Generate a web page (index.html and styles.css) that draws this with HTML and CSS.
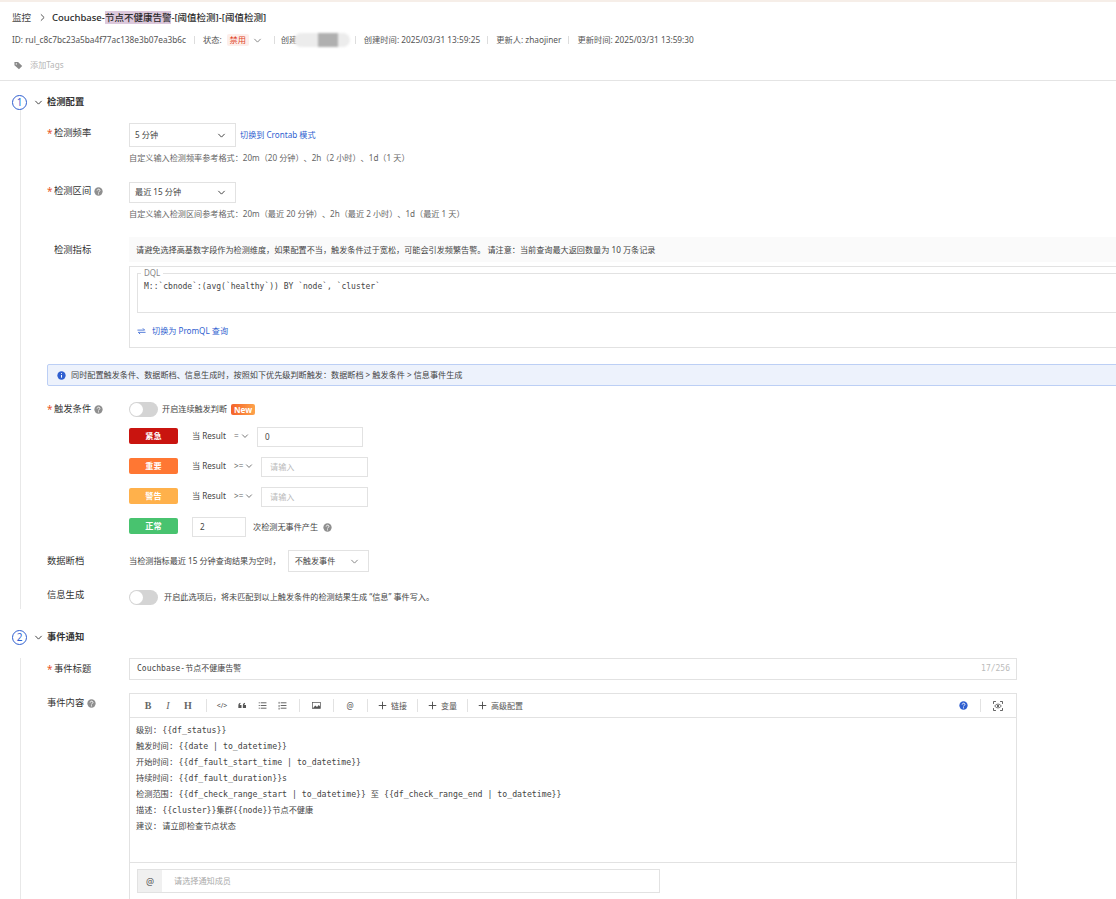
FILE: index.html
```html
<!DOCTYPE html>
<html lang="zh-CN">
<head>
<meta charset="utf-8">
<title>Couchbase-节点不健康告警</title>
<link rel="stylesheet" href="styles.css">
</head>
<body>
<svg class="defs" width="0" height="0" aria-hidden="true">
  <symbol id="chev" viewBox="0 0 10 10"><path d="M1.5 3.2 5 6.8l3.5-3.6" fill="none" stroke="currentColor" stroke-width="1.1"/></symbol>
  <symbol id="help" viewBox="0 0 10 10"><circle cx="5" cy="5" r="4.6" fill="currentColor"/><path d="M3.5 4c0-2 3.1-2 3.1-.2 0 1.2-1.6 1.1-1.6 2.3" fill="none" stroke="#fff" stroke-width="1"/><circle cx="5" cy="7.6" r=".65" fill="#fff"/></symbol>
  <symbol id="plus" viewBox="0 0 10 10"><path d="M5 .8v8.4M.8 5h8.4" stroke="currentColor" stroke-width="1"/></symbol>
</svg>
<div class="strip"></div>
<header class="head">
  <div class="crumbs"><span class="crumb-root">监控</span><svg class="crumb-sep"><use href="#chev"/></svg><h1 class="title">Couchbase-<mark class="mark">节点不健康告警</mark>-[阈值检测]-[阈值检测]</h1></div>
  <div class="meta">
    <span>ID: rul_c8c7bc23a5ba4f77ac138e3b07ea3b6c</span><i class="bar"></i>
    <span>状态:</span><span class="status">禁用</span><svg class="ic9 grey status-chev"><use href="#chev"/></svg><i class="bar"></i>
    <span class="creator">创建<span class="blur"><span class="blur-block"></span></span></span><i class="bar"></i>
    <span>创建时间: 2025/03/31 13:59:25</span><i class="bar bar-n"></i>
    <span>更新人: zhaojiner</span><i class="bar bar-n"></i>
    <span>更新时间: 2025/03/31 13:59:30</span>
  </div>
  <div class="tags"><svg class="tag-ic" viewBox="0 0 10 10"><path d="M.5 1.2h4l4.6 4.4-3.6 3.6L.5 4.8z" fill="#8a8a8a"/><circle cx="2.6" cy="3.2" r=".8" fill="#fff"/></svg><span>添加Tags</span></div>
</header>

<main class="main">
  <div class="sec-head"><span class="step">1</span><svg class="ic9 dark"><use href="#chev"/></svg><h2 class="sec-title">检测配置</h2></div>
  <section class="sec-body sec-one">
    <div class="row r-freq">
      <label class="lab"><b class="req">*</b>检测频率</label>
      <div class="col">
        <div class="line"><div class="select s-a">5 分钟<svg class="ic9 dark"><use href="#chev"/></svg></div><a class="link crontab">切换到 Crontab 模式</a></div>
        <p class="hint">自定义输入检测频率参考格式：20m（20 分钟）、2h（2 小时）、1d（1 天）</p>
      </div>
    </div>
    <div class="row r-range">
      <label class="lab"><b class="req">*</b>检测区间<svg class="ic9 q"><use href="#help"/></svg></label>
      <div class="col">
        <div class="select s-b">最近 15 分钟<svg class="ic9 dark"><use href="#chev"/></svg></div>
        <p class="hint">自定义输入检测区间参考格式：20m（最近 20 分钟）、2h（最近 2 小时）、1d（最近 1 天）</p>
      </div>
    </div>
    <div class="row r-metric">
      <label class="lab lab-plain">检测指标</label>
      <div class="col col-wide">
        <div class="notice">请避免选择高基数字段作为检测维度，如果配置不当，触发条件过于宽松，可能会引发频繁告警。 请注意：当前查询最大返回数量为 10 万条记录</div>
        <div class="dql-box">
          <fieldset class="dql"><legend class="legend">DQL</legend><code class="code">M::`cbnode`:(avg(`healthy`)) BY `node`, `cluster`</code></fieldset>
          <a class="link switch"><svg class="swap" viewBox="0 0 10 8"><path d="M.5 3h8L6.500 1M9.500 5.500h-8l2 2" fill="none" stroke="currentColor" stroke-width=".9"/></svg>切换为 PromQL 查询</a>
        </div>
      </div>
    </div>
    <div class="alert"><svg class="alert-ic" viewBox="0 0 10 10"><circle cx="5" cy="5" r="4.600" fill="#2f5fd0"/><path d="M5 4.400v3M5 2.400v1" stroke="#fff" stroke-width="1.100"/></svg>同时配置触发条件、数据断档、信息生成时，按照如下优先级判断触发：数据断档 &gt; 触发条件 &gt; 信息事件生成</div>
    <div class="row r-trigger">
      <label class="lab"><b class="req">*</b>触发条件<svg class="ic9 q"><use href="#help"/></svg></label>
      <div class="col">
        <div class="line toggle-line"><span class="toggle"></span><span class="toggle-text">开启连续触发判断</span><span class="new">New</span></div>
        <div class="level"><span class="badge red">紧急</span><span class="when">当 Result</span><span class="op op-eq">=<svg class="ic8"><use href="#chev"/></svg></span><span class="input i-a">0</span></div>
        <div class="level"><span class="badge orange">重要</span><span class="when">当 Result</span><span class="op">&gt;=<svg class="ic8"><use href="#chev"/></svg></span><span class="input i-b ph">请输入</span></div>
        <div class="level"><span class="badge amber">警告</span><span class="when">当 Result</span><span class="op">&gt;=<svg class="ic8"><use href="#chev"/></svg></span><span class="input i-b ph">请输入</span></div>
        <div class="level"><span class="badge green">正常</span><span class="input i-c">2</span><span class="times">次检测无事件产生</span><svg class="ic9 q q-times"><use href="#help"/></svg></div>
      </div>
    </div>
    <div class="row r-gap">
      <label class="lab lab-flush">数据断档</label>
      <div class="line"><span class="gap-text">当检测指标最近 15 分钟查询结果为空时，</span><div class="select s-c">不触发事件<svg class="ic9 grey"><use href="#chev"/></svg></div></div>
    </div>
    <div class="row r-info">
      <label class="lab lab-flush lab-info">信息生成</label>
      <div class="line"><span class="toggle"></span><span class="info-text">开启此选项后，将未匹配到以上触发条件的检测结果生成 “信息” 事件写入。</span></div>
    </div>
  </section>

  <div class="sec-head sec-head-2"><span class="step">2</span><svg class="ic9 dark"><use href="#chev"/></svg><h2 class="sec-title">事件通知</h2></div>
  <section class="sec-body">
    <div class="row r-title">
      <label class="lab lab-mid"><b class="req">*</b>事件标题</label>
      <div class="title-input"><span>Couchbase-节点不健康告警</span><span class="count">17/256</span></div>
    </div>
    <div class="row r-content">
      <label class="lab lab-flush lab-content">事件内容<svg class="ic9 q"><use href="#help"/></svg></label>
      <div class="editor">
        <div class="toolbar">
          <span class="tb serif">B</span><span class="tb serif it">I</span><span class="tb serif">H</span><i class="tsep t-a"></i>
          <span class="tb code-ic">&lt;/&gt;</span>
          <span class="tb"><svg class="tool-ic" viewBox="0 0 10 10"><path d="M2.400 2C1 2.500.4 3.600.4 5.100v2.600h3.500V4.400H2c0-.7.3-1.100 1-1.400zM7.400 2C6 2.500 5.400 3.600 5.400 5.100v2.600h3.500V4.400H7c0-.7.3-1.100 1-1.400z" fill="#555"/></svg></span>
          <span class="tb"><svg class="tool-ic" viewBox="0 0 10 10"><path d="M.8 2h1.200M.8 5h1.200M.8 8h1.200M3 2h6.400M3 5h6.400M3 8h6.400" stroke="#555" stroke-width="1"/></svg></span>
          <span class="tb"><svg class="tool-ic" viewBox="0 0 10 10"><path d="M1.200 1v2M1.200 4.500v2M1.200 7.500v2M3 2h6.400M3 5h6.400M3 8h6.400" stroke="#555" stroke-width="1"/></svg></span><i class="tsep"></i>
          <span class="tb"><svg class="tool-ic" viewBox="0 0 10 10"><rect x=".6" y="1.800" width="8.800" height="6.400" fill="none" stroke="#555" stroke-width=".8"/><path d="M1 8l2.600-3 2 1.800L7.500 4.500 9 6v2z" fill="#555"/></svg></span><i class="tsep"></i>
          <span class="tb at">@</span><i class="tsep t-w-l"></i>
          <span class="tb-text"><svg class="ic9 dark"><use href="#plus"/></svg>链接</span><i class="tsep t-w"></i>
          <span class="tb-text"><svg class="ic9 dark"><use href="#plus"/></svg>变量</span><i class="tsep t-w"></i>
          <span class="tb-text"><svg class="ic9 dark"><use href="#plus"/></svg>高级配置</span>
          <svg class="ic9 tool-help"><use href="#help"/></svg><i class="tsep tsep-end"></i>
          <svg class="tool-eye" viewBox="0 0 12 12"><path d="M.6 3.500V.6h2.900M8.500.6h2.900v2.900M11.400 8.500v2.900H8.500M3.500 11.400H.6V8.500" fill="none" stroke="#444" stroke-width="1"/><path d="M2 6c2-3 6-3 8 0-2 3-6 3-8 0z" fill="none" stroke="#444" stroke-width=".9"/><circle cx="6" cy="6" r="1.300" fill="#444"/></svg>
        </div>
        <div class="body">
          <p>级别: {{df_status}}</p>
          <p>触发时间: {{date | to_datetime}}</p>
          <p>开始时间: {{df_fault_start_time | to_datetime}}</p>
          <p>持续时间: {{df_fault_duration}}s</p>
          <p>检测范围: {{df_check_range_start | to_datetime}} 至 {{df_check_range_end | to_datetime}}</p>
          <p>描述: {{cluster}}集群{{node}}节点不健康</p>
          <p>建议: 请立即检查节点状态</p>
        </div>
        <div class="mention-wrap"><div class="mention"><span class="mention-at">@</span><span class="mention-ph">请选择通知成员</span></div></div>
      </div>
    </div>
  </section>
</main>
</body>
</html>
```
FILE: styles.css
```css
* { box-sizing: border-box; }
html, body { margin: 0; padding: 0; height: 899px; overflow: hidden; background: #fff; }
body { font-family: "Noto Sans", "Noto Sans CJK SC", sans-serif; font-size: 8.150px; color: #444; line-height: 1; text-spacing-trim: space-all; }
.defs { position: absolute; }
p, h1, h2 { margin: 0; font-weight: inherit; font-size: inherit; }
svg { flex: none; }
a { text-decoration: none; }

.strip { height: 2px; background: #f6eee8; }
.head { height: 79px; border-bottom: 1px solid #e4e4e4; padding: 9px 12px 0; }
.crumbs { display: flex; align-items: center; height: 13px; }
.crumb-root { font-size: 9.500px; color: #444; }
.crumb-sep { width: 9px; height: 9px; margin: 0 5px 0 7px; transform: rotate(-90deg); color: #555; }
.title { font-size: 9.500px; font-weight: 500; color: #2a2a2a; white-space: nowrap; }
.mark { background: #dcc8dc; color: inherit; }
.meta { display: flex; align-items: center; height: 14px; margin-top: 9px; white-space: nowrap; color: #555; font-size: 8.280px; }
.bar { width: 1px; height: 8px; background: #ddd; margin: 0 8px; }
.bar-n { margin: 0 8px 0 7px; }
.status { width: 22px; text-align: center; background: #fdeeea; color: #e0452a; padding: 2px 0; border-radius: 2px; margin-left: 5px; }
.status-chev { margin: 0 4px; }
.creator { position: relative; width: 66px; margin-left: -2px; }
.blur { position: absolute; left: 13px; top: -3px; width: 56px; height: 14px; border-radius: 7px; background: #ececec; filter: blur(1px); }
.blur-block { position: absolute; left: 24px; top: 0; width: 20px; height: 14px; background: #b0b0b0; }
.tags { display: flex; align-items: center; margin-top: 14px; margin-left: 2px; color: #b5b5b5; }
.tag-ic { width: 9px; height: 9px; margin-right: 7px; }

.main { position: relative; }
.sec-head { display: flex; align-items: center; height: 16px; margin: 13px 0 0 12px; }
.sec-head-2 { margin-top: 20px; }
.step { width: 15px; height: 15px; margin-right: 7px; border: 1px solid #2f5fd0; border-radius: 50%; color: #2f5fd0; font-size: 10px; display: flex; align-items: center; justify-content: center; }
.sec-title { font-size: 9.300px; font-weight: 700; color: #333; margin-left: 4px; }
.ic9 { width: 9px; height: 9px; }
.ic8 { width: 8px; height: 8px; margin-left: 2px; }
.dark { color: #444; }
.grey { color: #888; }
.q { color: #8f8f8f; margin-left: 3px; }

.sec-body { margin-left: 20px; border-left: 1px solid #e8e8e8; padding-left: 26px; }
.sec-one { padding-top: 13px; height: 499px; }
.row { display: flex; }
.lab { width: 82px; flex: none; font-size: 9.300px; color: #333; display: flex; align-items: center; align-self: flex-start; height: 14px; }
.lab-plain { padding-left: 7px; }
.req { color: #e8562a; font-weight: 400; width: 7px; font-size: 10px; }
.r-freq .lab { margin-top: 3px; }
.r-range .lab { margin-top: 2px; }
.r-metric .lab { margin-top: 6px; }
.col { flex: none; }
.col-wide { width: 1100px; }
.line { display: flex; align-items: center; }
.select { display: flex; align-items: center; justify-content: space-between; border: 1px solid #e2e2e2; background: #fff; color: #444; padding: 0 9px 0 5px; }
.s-a { width: 107px; height: 24px; }
.s-b { width: 107px; height: 21px; }
.s-c { width: 81px; height: 22px; margin-left: 7px; padding-left: 6px; }
.link { color: #2f5fd0; }
.crontab { margin-left: 4px; }
.hint { margin-top: 7px; color: #666; height: 8px; line-height: 8px; white-space: nowrap; }
.r-freq { height: 59px; }
.r-range { height: 55px; }
.r-metric { height: 127px; }
.notice { height: 25px; line-height: 25px; background: #fafafa; padding-left: 7px; color: #444; white-space: nowrap; }
.dql-box { margin-top: 4px; height: 82px; border: 1px solid #e2e2e2; padding: 2px 7px 0; }
.dql { margin: 0; padding: 0 6px; height: 44px; border: 1px solid #e2e2e2; display: block; }
.legend { padding: 0 3px; color: #888; margin-left: -3px; line-height: 8px; font-size: 8px; }
.code { display: block; font-family: "DejaVu Sans Mono", monospace; font-size: 8px; color: #444; margin-top: 6px; white-space: nowrap; }
.switch { display: flex; align-items: center; margin: 14px 0 0 0; }
.swap { width: 9px; height: 8px; margin-right: 6px; }
.alert { display: flex; align-items: center; width: 1100px; height: 22px; background: #edf2fc; border: 1px solid #bccff5; border-radius: 2px; padding-left: 9px; color: #444; white-space: nowrap; }
.alert-ic { width: 9px; height: 9px; margin-right: 5px; }
.r-trigger { margin-top: 16px; height: 148px; }
.toggle-line { height: 15px; }
.toggle { display: block; position: relative; width: 29px; height: 15px; border-radius: 8px; background: #d4d4d4; flex: none; }
.toggle::after { content: ""; position: absolute; left: 1px; top: 1px; width: 13px; height: 13px; border-radius: 50%; background: #fff; }
.toggle-text { margin-left: 4px; }
.new { margin-left: 4px; width: 24px; height: 11px; border-radius: 2px; background: linear-gradient(90deg, #f4622a, #fda34a); color: #fff; font-weight: 700; text-align: center; line-height: 11px; }
.level { display: flex; align-items: center; height: 20px; margin-top: 10px; }
.badge { width: 49px; height: 16px; margin-bottom: 2px; border-radius: 2px; color: #fff; font-weight: 700; text-align: center; line-height: 16px; }
.red { background: #c9140f; }
.orange { background: #ff7733; }
.amber { background: #ffb14b; }
.green { background: #48c36f; }
.when { margin: 0 0 2px 14px; width: 42px; white-space: nowrap; }
.op { display: flex; align-items: center; width: 27px; margin-bottom: 2px; color: #666; }
.op-eq { width: 23px; }
.input { display: flex; align-items: center; border: 1px solid #e2e2e2; height: 20px; padding-left: 7px; color: #444; }
.ph { color: #bbb; padding-left: 8px; }
.i-a { width: 106px; }
.i-b { width: 107px; }
.i-c { width: 54px; margin-left: 14px; }
.times { margin-left: 7px; }
.q-times { margin-left: 5px; }
.r-gap { height: 40px; align-items: flex-start; }
.r-info { height: 14px; align-items: flex-start; }
.lab-flush { padding: 0; height: 22px; }
.lab-info { height: 10px; }
.lab-content { height: 20px; }
.lab-mid { align-self: center; }
.gap-text { white-space: nowrap; }
.info-text { margin-left: 6px; white-space: nowrap; }

.r-title { margin-top: 13px; align-items: center; }
.title-input { width: 888px; height: 22px; border: 1px solid #e2e2e2; display: flex; align-items: center; justify-content: space-between; padding: 0 6px 0 7px; font-family: "DejaVu Sans Mono", "Noto Sans CJK SC", monospace; font-size: 8px; color: #444; }
.count { color: #bbb; }
.r-content { margin-top: 13px; }
.editor { width: 888px; height: 240px; border: 1px solid #e2e2e2; border-bottom: 0; flex: none; }
.toolbar { display: flex; align-items: center; height: 24px; border-bottom: 1px solid #e2e2e2; padding-left: 8px; color: #555; }
.tb { width: 20px; display: flex; justify-content: center; align-items: center; }
.serif { font-family: "Liberation Serif", serif; font-size: 10px; font-weight: 700; color: #666; }
.it { font-style: italic; font-weight: 400; }
.code-ic { font-size: 7px; }
.at { font-size: 8px; }
.tool-ic { width: 9px; height: 9px; }
.tsep { width: 1px; height: 13px; background: #e2e2e2; margin: 0 6px 0 7px; }
.t-a { margin: 0 5px 0 8px; }
.t-w-l { margin: 0 10px 0 7px; }
.t-w { margin: 0 10px; }
.tb-text { display: flex; align-items: center; gap: 4px; font-size: 8px; }
.tool-help { color: #2f5fd0; margin-left: auto; }
.tsep-end { margin: 0 12px; }
.tool-eye { width: 10px; height: 10px; margin-right: 13px; }
.body { height: 145px; border-bottom: 1px solid #e2e2e2; padding: 4px 6px; font-family: "DejaVu Sans Mono", "Noto Sans CJK SC", monospace; font-size: 8.200px; color: #444; }
.body p { height: 16px; line-height: 16px; white-space: nowrap; }
.mention-wrap { padding: 6px 7px; }
.mention { display: flex; align-items: center; width: 523px; height: 24px; border: 1px solid #e2e2e2; }
.mention-at { width: 24px; height: 22px; background: #f0f0f0; display: flex; align-items: center; justify-content: center; color: #555; font-size: 9px; }
.mention-ph { margin-left: 12px; color: #aaa; }
```
